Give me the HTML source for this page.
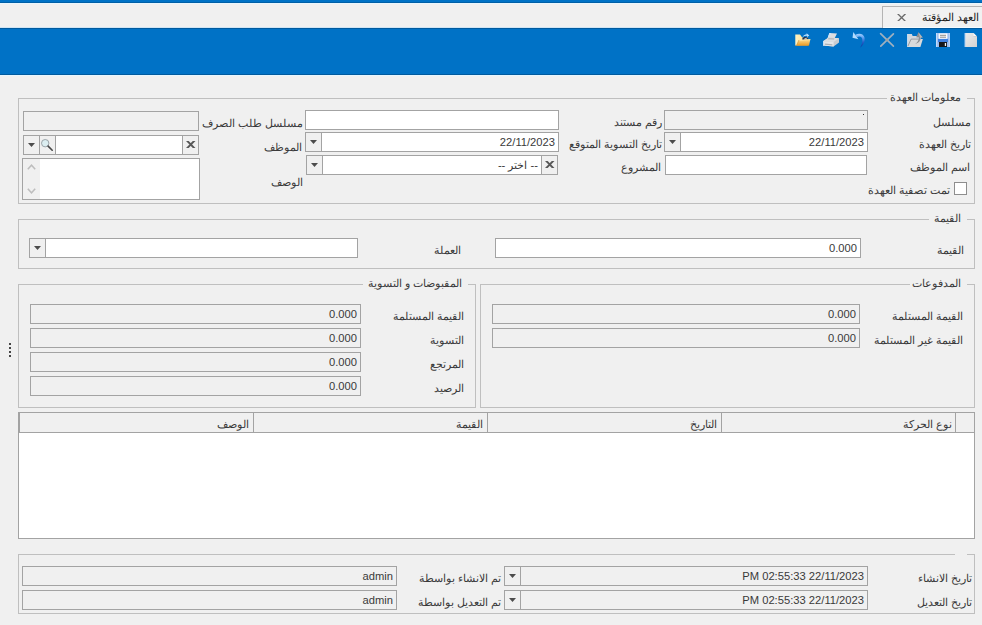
<!DOCTYPE html>
<html lang="ar">
<head>
<meta charset="utf-8">
<title>العهد المؤقتة</title>
<style>
*{box-sizing:border-box;margin:0;padding:0}
html,body{width:982px;height:625px;overflow:hidden;background:#f0f0f0}
body{position:relative;font-family:"Liberation Sans",sans-serif;font-size:11px;color:#3c3c3c}
.a{position:absolute}
.strip{left:0;top:0;width:982px;height:3px;background:#0072c6;border-bottom:1px solid #005fa6}
.hl1{left:0;top:3px;width:982px;height:1px;background:#e9f6fd}
.tab{left:882px;top:6px;width:101px;height:22px;border:1px solid #b4b4b4;border-bottom:0;background:#f1f1f1}
.tabtxt{right:3px;top:2px;height:16px;line-height:16px;font-size:11px;color:#1e1e1e;white-space:nowrap;direction:rtl}
.bar{left:0;top:28px;width:982px;height:47px;background:#0072c6;border-top:1px solid #005a9e;border-bottom:1px solid #005a9e}
.hl3{left:0;top:27px;width:882px;height:1px;background:#cfe4f4}
.hl2{left:0;top:75px;width:982px;height:1px;background:#e6f6ff}
.tabfoot{left:883px;top:27px;width:99px;height:1px;background:#f4fbff}
.ic{width:16px;height:16px;top:32px}
/* group boxes */
.g{border:1px solid #bfbfbf}
.lg{background:#f0f0f0;height:14px;line-height:12px;white-space:nowrap;direction:rtl;text-align:right;padding-right:6px}
/* labels */
.l{height:18px;line-height:18px;white-space:nowrap;direction:rtl;text-align:right;color:#3a3a3a}
/* fields */
.f{border:1px solid #a3a3a3;background:#fff;height:20px}
.d{background:#f0f0f0}
.v{right:3px;top:0;height:18px;line-height:18px;font-size:11.2px;white-space:nowrap;color:#3a3a3a}
.b{top:0;width:16px;height:18px;background:#f0f0f0}
.bl{left:0;border-right:1px solid #a3a3a3}
.br{right:0;border-left:1px solid #a3a3a3}
.ar{left:4px;top:7px;width:7px;height:4px;background:#4c4c4c;clip-path:polygon(0 0,100% 0,50% 100%)}
</style>
</head>
<body>
<div class="a strip"></div>
<div class="a hl1"></div>
<div class="a bar"></div>
<div class="a hl2"></div>
<div class="a hl3"></div>
<div class="a tab"><div class="a tabtxt">العهد المؤقتة</div>
<svg class="a" style="left:14px;top:7px" width="9.2" height="7.2" viewBox="0 0 9.2 7.2"><path d="M0 0 H1.9 L9.2 7.2 H7.3 Z M7.3 0 H9.2 L1.9 7.2 H0 Z" fill="#6a6a6a"/></svg>
</div>
<div class="a tabfoot"></div>
<!-- toolbar icons -->
<svg class="a ic" style="left:963px" viewBox="0 0 16 16"><defs><linearGradient id="gn" x1="0" y1="0" x2="1" y2="1"><stop offset="0" stop-color="#ececec"/><stop offset="1" stop-color="#d2d2d2"/></linearGradient></defs><path d="M2 1 H10.5 L14 4.5 V15 H2 Z" fill="url(#gn)"/><path d="M2 1 V15" stroke="#a9cdf3" stroke-width="1"/><path d="M10.5 1 V4.5 H14 Z" fill="#f8f8f8"/><path d="M10.5 4.5 H14" stroke="#bdbdbd" stroke-width=".6"/></svg>
<svg class="a ic" style="left:935px" viewBox="0 0 16 16"><rect x="1" y="1" width="14" height="14" fill="#98bcf1"/><rect x="1" y="1" width="1.2" height="14" fill="#c4dbfa"/><rect x="13.8" y="1" width="1.2" height="14" fill="#b4cff6"/><rect x="3" y="6.8" width="10" height="3.4" fill="#3d7fe0"/><rect x="3.6" y="1.4" width="8.8" height="5.4" fill="#fbfbfb"/><rect x="5" y="2.8" width="6" height="1" fill="#8d8d8d"/><rect x="5" y="4.7" width="6" height="1" fill="#8d8d8d"/><rect x="4" y="10" width="8" height="5" fill="#15171c"/><rect x="9.8" y="11" width="1.3" height="3" fill="#f0f0f0"/></svg>
<svg class="a ic" style="left:907px" viewBox="0 0 16 16"><path d="M0 2.1 H4.9 L5.6 3.9 H12.4 V15 H0 Z" fill="#d3d8de"/><path d="M0.4 2.1 V15" stroke="#b9d8f6" stroke-width=".8"/><path d="M4 7 H15.9 L13.4 15 H0.3 Z" fill="#dadbdc"/><path d="M0.9 14.2 L4.1 7.1 H12" stroke="#8d8f92" stroke-width=".8" fill="none"/><path d="M8.2 11.7 C10.4 10.6 11.9 8.6 12 5.5 L9.2 5.3 L11.4 0.3 L15.7 5.5 L13.7 5.5 C13.6 9.2 11.4 11.3 8.2 11.7 Z" fill="#8b8d90"/><path d="M11.4 0.3 L15.7 5.5 L13.7 5.5 C13.7 7 13.3 8.3 12.6 9.2 C13 7.6 13 6.4 12.9 5.2 Z" fill="#b4b6b9"/></svg>
<svg class="a ic" style="left:879px" viewBox="0 0 16 16"><path d="M1.6 1.6 L14.4 14.2 M14.4 1.8 L1.8 14.2" stroke="#9fb0bf" stroke-width="1.7" stroke-linecap="round" fill="none"/><circle cx="8" cy="8" r="1.3" fill="#a3a3a3"/></svg>
<svg class="a ic" style="left:851px" viewBox="0 0 16 16"><defs><linearGradient id="gu" x1="0" y1="0" x2="0" y2="1"><stop offset="0" stop-color="#a2d2ff"/><stop offset=".3" stop-color="#5b9cf0"/><stop offset=".6" stop-color="#2560c8"/><stop offset="1" stop-color="#08309a"/></linearGradient></defs><path d="M4.3 2.8 C8 0.6 13 1.6 13.6 6 C14 10 12 13.4 9.2 15.8 C10.8 12.6 11.6 9.6 11.2 7 C10.8 4.4 8.6 3.8 5.9 5.2 Z" fill="url(#gu)"/><path d="M2.3 0 L7.4 7.2 L1.5 5.8 Z" fill="#b2dbff"/></svg>
<svg class="a ic" style="left:823px" viewBox="0 0 16 16"><path d="M6.4 1 L14 1.4 L11 7.6 L4.2 7.2 Z" fill="#dcdee1"/><path d="M6.4 1 L8.2 1.1 L5.6 7.3 L4.2 7.2 Z" fill="#cfe3f8"/><path d="M0 9.2 L5.6 5.6 L16 6.2 L16 10.4 L10.6 14.4 L0 13.4 Z" fill="#c9ccd0"/><path d="M0 9.2 L5.6 5.6 L16 6.2 L10.6 10 Z" fill="#dcdfe2"/><path d="M4.6 7.2 L11 7.6 L11.5 6.6 L5.6 6.3 Z" fill="#a9acb0"/><path d="M0 9.2 L10.6 10 L10.6 14.4 L0 13.4 Z" fill="#e4e7ea"/><path d="M1.8 11.6 L9.4 12.3 L9.4 13.6 L1.8 12.8 Z" fill="#adb0b4"/><path d="M0 9.2 L0 13.4 L0.8 13.5 L0.8 9.3 Z" fill="#bcdcfb"/></svg>
<svg class="a ic" style="left:795px" viewBox="0 0 16 16"><defs><linearGradient id="gf" x1="0" y1="0" x2="0" y2="1"><stop offset="0" stop-color="#ffdf92"/><stop offset="1" stop-color="#eb9a24"/></linearGradient><linearGradient id="gb" x1="0" y1="0" x2="1" y2="0"><stop offset="0" stop-color="#fff3c4"/><stop offset="1" stop-color="#ffd982"/></linearGradient></defs><path d="M0.3 2.4 H5 L7.2 5.4 H12.8 V13.5 H0.3 Z" fill="url(#gb)"/><path d="M7.4 6.6 C7.6 4.2 12.8 4.4 13.4 7 L13.4 7.8 L7.4 7.9 Z" fill="#1d2f50"/><path d="M9 7.5 C9.3 5.7 11.9 5.7 12.3 7.4 Z" fill="#f2e4d4"/><path d="M4 8 L15.4 7.3 L14 13.5 H1.4 Z" fill="url(#gf)"/><path d="M4 8 L15.4 7.3 L15.2 8 L3.8 8.7 Z" fill="#ffe8a8"/><path d="M4 8 L1.5 13.4" stroke="#c98d34" stroke-width=".6"/><path d="M0.3 13.5 H14" stroke="#cf8d2a" stroke-width=".5"/><path d="M7.6 5 C8.6 3 10.4 2.2 11.9 2.3 L11.4 0.9 L14.3 3.5 L12.2 5.1 L12 3.8 C10.6 3.7 9 4.1 7.6 5 Z" fill="#b5deff"/></svg>


<!-- group 1 -->
<div class="a g" style="left:18px;top:98px;width:957px;height:106px"></div>
<div class="a lg" style="left:887px;top:91px;width:80px">معلومات العهدة</div>

<div class="a l" style="right:11px;top:113px">مسلسل</div>
<div class="a l" style="right:11px;top:135px">تاريخ العهدة</div>
<div class="a l" style="right:12px;top:158px">اسم الموظف</div>
<div class="a f d" style="left:664px;top:110px;width:204px"><div class="a" style="right:3px;top:3px;width:1px;height:1px;background:#333"></div></div>
<div class="a f" style="left:664px;top:132px;width:204px"><div class="a b bl"><div class="a ar"></div></div><div class="a v">22/11/2023</div></div>
<div class="a f" style="left:665px;top:155px;width:202px"></div>
<div class="a" style="left:954px;top:182px;width:13px;height:13px;border:1px solid #8e8e8e;background:#fff"></div>
<div class="a l" style="right:32px;top:181px">تمت تصفية العهدة</div>

<div class="a l" style="right:320px;top:113px">رقم مستند</div>
<div class="a l" style="right:320px;top:135px">تاريخ التسوية المتوقع</div>
<div class="a l" style="right:321px;top:158px">المشروع</div>
<div class="a f" style="left:305px;top:110px;width:254px"></div>
<div class="a f" style="left:305px;top:132px;width:254px"><div class="a b bl"><div class="a ar"></div></div><div class="a v">22/11/2023</div></div>
<div class="a f" style="left:306px;top:155px;width:252px"><div class="a b bl"><div class="a ar"></div></div><div class="a b br"><svg class="a" style="left:3px;top:5px" width="9.5" height="7" viewBox="0 0 9.5 7"><path d="M0 0 H2.7 L9.5 7 H6.8 Z M6.8 0 H9.5 L2.7 7 H0 Z" fill="#585858"/></svg></div><div class="a v" style="right:19px;direction:rtl">-- اختر --</div></div>

<div class="a l" style="right:679px;top:114px">مسلسل طلب الصرف</div>
<div class="a l" style="right:680px;top:138px">الموظف</div>
<div class="a l" style="right:679px;top:173px">الوصف</div>
<div class="a f d" style="left:23px;top:111px;width:176px"></div>
<div class="a f" style="left:23px;top:135px;width:176px"><div class="a b bl"><div class="a ar"></div></div><div class="a b bl" style="left:16px"><svg class="a" style="left:0px;top:2px" width="14" height="14" viewBox="0 0 14 14"><circle cx="5.2" cy="5.2" r="3.7" fill="#dceef1" stroke="#9aa3a8" stroke-width="1"/><path d="M8.1 8.1 L12.2 12.2" stroke="#474747" stroke-width="1.6" stroke-linecap="round"/></svg></div><div class="a b br"><svg class="a" style="left:3px;top:5px" width="9.5" height="7" viewBox="0 0 9.5 7"><path d="M0 0 H2.7 L9.5 7 H6.8 Z M6.8 0 H9.5 L2.7 7 H0 Z" fill="#585858"/></svg></div></div>
<div class="a f" style="left:22px;top:158px;width:178px;height:42px"><div class="a" style="left:0;top:0;width:17px;height:40px;background:#f0f0f0"><svg class="a" style="left:4px;top:5px" width="9" height="6" viewBox="0 0 9 6"><path d="M0.8 5.2 L4.5 1.2 L8.2 5.2" stroke="#bdbdbd" stroke-width="1.5" fill="none"/></svg><svg class="a" style="left:4px;top:29px" width="9" height="6" viewBox="0 0 9 6"><path d="M0.8 0.8 L4.5 4.8 L8.2 0.8" stroke="#bdbdbd" stroke-width="1.5" fill="none"/></svg></div></div>

<!-- group 2 -->
<div class="a g" style="left:18px;top:219px;width:957px;height:50px"></div>
<div class="a lg" style="left:929px;top:212px;width:38px">القيمة</div>
<div class="a l" style="right:18px;top:241px">القيمة</div>
<div class="a f" style="left:495px;top:238px;width:366px"><div class="a v">0.000</div></div>
<div class="a l" style="right:521px;top:241px">العملة</div>
<div class="a f" style="left:29px;top:238px;width:329px"><div class="a b bl"><div class="a ar"></div></div></div>

<!-- group 3 -->
<div class="a g" style="left:480px;top:284px;width:495px;height:124px"></div>
<div class="a lg" style="left:910px;top:277px;width:57px">المدفوعات</div>
<div class="a l" style="right:19px;top:307px">القيمة المستلمة</div>
<div class="a l" style="right:19px;top:331px">القيمة غير المستلمة</div>
<div class="a f d" style="left:492px;top:304px;width:368px"><div class="a v">0.000</div></div>
<div class="a f d" style="left:492px;top:328px;width:368px"><div class="a v">0.000</div></div>

<!-- group 4 -->
<div class="a g" style="left:18px;top:284px;width:458px;height:124px"></div>
<div class="a lg" style="left:363px;top:277px;width:105px">المقبوضات و التسوية</div>
<div class="a l" style="right:518px;top:307px">القيمة المستلمة</div>
<div class="a l" style="right:518px;top:331px">التسوية</div>
<div class="a l" style="right:518px;top:355px">المرتجع</div>
<div class="a l" style="right:518px;top:379px">الرصيد</div>
<div class="a f d" style="left:30px;top:304px;width:331px"><div class="a v">0.000</div></div>
<div class="a f d" style="left:30px;top:328px;width:331px"><div class="a v">0.000</div></div>
<div class="a f d" style="left:30px;top:352px;width:331px"><div class="a v">0.000</div></div>
<div class="a f d" style="left:30px;top:376px;width:331px"><div class="a v">0.000</div></div>

<!-- splitter dots -->
<div class="a" style="left:9px;top:343px;width:2px;height:2px;background:#454545;box-shadow:0 4px 0 #454545,0 8px 0 #454545,0 12px 0 #454545"></div>

<!-- grid -->
<div class="a" style="left:18px;top:412px;width:957px;height:127px;border:1px solid #a3a3a3;background:#fff">
<div class="a" style="left:0;top:0;width:955px;height:20px;background:#f0f0f0;border-bottom:1px solid #a3a3a3;border-left:1px solid #a3a3a3"></div>
<div class="a" style="left:936px;top:0;width:1px;height:19px;background:#a3a3a3"></div>
<div class="a" style="left:702px;top:0;width:1px;height:19px;background:#a3a3a3"></div>
<div class="a" style="left:468px;top:0;width:1px;height:19px;background:#a3a3a3"></div>
<div class="a" style="left:234px;top:0;width:1px;height:19px;background:#a3a3a3"></div>
<div class="a l" style="left:703px;top:2px;width:230px">نوع الحركة</div>
<div class="a l" style="left:469px;top:2px;width:229px">التاريخ</div>
<div class="a l" style="left:235px;top:2px;width:229px">القيمة</div>
<div class="a l" style="left:1px;top:2px;width:229px">الوصف</div>
</div>

<!-- group 5 -->
<div class="a g" style="left:18px;top:554px;width:957px;height:60px"></div>
<div class="a lg" style="left:955px;top:547px;width:12px"></div>
<div class="a l" style="right:10px;top:569px">تاريخ الانشاء</div>
<div class="a l" style="right:10px;top:593px">تاريخ التعديل</div>
<div class="a f d" style="left:504px;top:566px;width:364px"><div class="a b bl"><div class="a ar"></div></div><div class="a v">PM 02:55:33 22/11/2023</div></div>
<div class="a f d" style="left:504px;top:590px;width:364px"><div class="a b bl"><div class="a ar"></div></div><div class="a v">PM 02:55:33 22/11/2023</div></div>
<div class="a l" style="right:481px;top:569px">تم الانشاء بواسطة</div>
<div class="a l" style="right:481px;top:593px">تم التعديل بواسطة</div>
<div class="a f d" style="left:22px;top:566px;width:375px"><div class="a v">admin</div></div>
<div class="a f d" style="left:22px;top:590px;width:375px"><div class="a v">admin</div></div>
</body>
</html>
